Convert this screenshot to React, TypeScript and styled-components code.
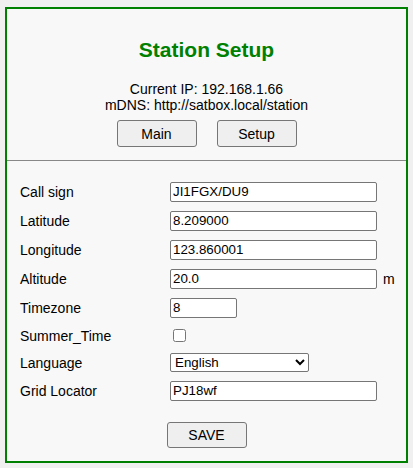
import React, { FC } from 'react';
import styled, { createGlobalStyle } from 'styled-components';

const GREEN = '#008000';
const TEXT = '#000000';
const FIELD_BORDER = '#767676';

const GlobalStyle = createGlobalStyle`
  html, body {
    margin: 0;
    padding: 0;
    background-color: #f0f0f0;
  }
  body {
    font-family: 'Liberation Sans', Arial, sans-serif;
    font-size: 14px;
    color: ${TEXT};
  }
`;

const Page = styled.div`
  padding: 7px 5px 5px 5px;
`;

const Panel = styled.div`
  border: 2px solid ${GREEN};
  background-color: #f8f8f8;
`;

const Header = styled.div`
  padding: 29px 0 13px 0;
  text-align: center;
`;

const Title = styled.h2`
  margin: 0 0 19px 0;
  font-size: 21px;
  line-height: 24px;
  font-weight: bold;
  color: ${GREEN};
`;

const Info = styled.div`
  line-height: 16px;
`;

const NavRow = styled.div`
  display: flex;
  justify-content: center;
  gap: 20px;
  margin-top: 7px;
`;

const Button = styled.button`
  box-sizing: border-box;
  width: 80px;
  height: ${(p: { $h?: number }) => p.$h ?? 27}px;
  padding: 0;
  font-family: 'Liberation Sans', Arial, sans-serif;
  font-size: 14px;
  color: ${TEXT};
  background-color: #efefef;
  border: 1px solid ${FIELD_BORDER};
  border-radius: 3px;
  cursor: pointer;
`;

const Divider = styled.hr`
  margin: 0;
  border: none;
  border-top: 1px solid #888888;
`;

const Form = styled.div`
  padding: 16px 0 0 13px;
`;

const Row = styled.div<{ $h: number }>`
  display: grid;
  grid-template-columns: 150px 1fr;
  align-items: center;
  height: ${p => p.$h}px;
`;

const Label = styled.label`
  line-height: 16px;
`;

const Field = styled.div`
  display: flex;
  align-items: center;
  gap: 6px;
`;

const TextInput = styled.input<{ $w?: number }>`
  box-sizing: border-box;
  width: ${p => p.$w ?? 207}px;
  height: 20px;
  margin: 0;
  padding: 1px 2px;
  font-family: 'Liberation Sans', Arial, sans-serif;
  font-size: 13.33px;
  color: ${TEXT};
  background-color: #ffffff;
  border: 1px solid ${FIELD_BORDER};
  border-radius: 2px;
  outline: none;
`;

const Check = styled.input`
  width: 13px;
  height: 13px;
  margin: 3px 3px 3px 3px;
`;

const Select = styled.select`
  box-sizing: border-box;
  width: 139px;
  height: 19px;
  margin: 0;
  font-family: 'Liberation Sans', Arial, sans-serif;
  font-size: 13.33px;
  color: ${TEXT};
  background-color: #ffffff;
  border: 1px solid ${FIELD_BORDER};
  border-radius: 2px;
`;

const Unit = styled.span`
  line-height: 16px;
`;

const SaveRow = styled.div`
  display: flex;
  justify-content: center;
  padding: 17px 0 13px 0;
`;

const fields = [
  { label: 'Call sign', value: 'JI1FGX/DU9' },
  { label: 'Latitude', value: '8.209000' },
  { label: 'Longitude', value: '123.860001' },
  { label: 'Altitude', value: '20.0', unit: 'm' },
  { label: 'Timezone', value: '8', width: 67 },
];

const App: FC = () => (
  <Page>
    <GlobalStyle />
    <Panel>
      <Header>
        <Title>Station Setup</Title>
        <Info>Current IP: 192.168.1.66</Info>
        <Info>mDNS: http://satbox.local/station</Info>
        <NavRow>
          <Button>Main</Button>
          <Button>Setup</Button>
        </NavRow>
      </Header>
      <Divider />
      <Form>
        {fields.map(f => (
          <Row $h={29} key={f.label}>
            <Label>{f.label}</Label>
            <Field>
              <TextInput $w={f.width} defaultValue={f.value} />
              {f.unit && <Unit>{f.unit}</Unit>}
            </Field>
          </Row>
        ))}
        <Row $h={27}>
          <Label>Summer_Time</Label>
          <Field>
            <Check type="checkbox" />
          </Field>
        </Row>
        <Row $h={27}>
          <Label>Language</Label>
          <Field>
            <Select defaultValue="en">
              <option value="en">English</option>
              <option value="ja">日本語</option>
            </Select>
          </Field>
        </Row>
        <Row $h={29}>
          <Label>Grid Locator</Label>
          <Field>
            <TextInput defaultValue="PJ18wf" />
          </Field>
        </Row>
      </Form>
      <SaveRow>
        <Button $h={26}>SAVE</Button>
      </SaveRow>
    </Panel>
  </Page>
);

export default App;
